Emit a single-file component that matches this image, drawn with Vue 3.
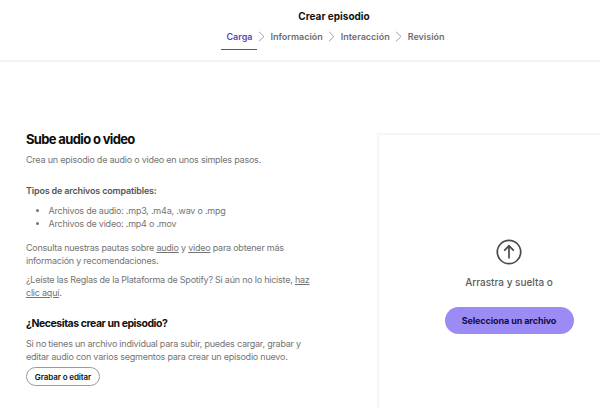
<script setup>
const steps = ['Información', 'Interacción', 'Revisión']
</script>

<template>
  <div class="page">
    <header class="top">
      <h1 class="crumb-title">Crear episodio</h1>
      <nav class="steps">
        <span class="step active">Carga</span>
        <template v-for="s in steps" :key="s">
          <svg class="chev" width="7" height="11" viewBox="0 0 7 11"><path d="M1 .8 6 5.5 1 10.2" fill="none" stroke="#a3a3a3" stroke-width="1"/></svg>
          <span class="step">{{ s }}</span>
        </template>
      </nav>
    </header>
    <main class="body">
      <section class="left">
        <h2 class="title">Sube audio o video</h2>
        <p class="lead">Crea un episodio de audio o video en unos simples pasos.</p>
        <p class="types">Tipos de archivos compatibles:</p>
        <ul class="list">
          <li>Archivos de audio: .mp3, .m4a, .wav o .mpg</li>
          <li>Archivos de video: .mp4 o .mov</li>
        </ul>
        <p class="para">Consulta nuestras pautas sobre <u>audio</u> y <u>video</u> para obtener más<br>información y recomendaciones.</p>
        <p class="para rules">¿Leíste las Reglas de la Plataforma de Spotify? Si aún no lo hiciste, <u>haz<br>clic aquí</u>.</p>
        <h3 class="need">¿Necesitas crear un episodio?</h3>
        <p class="para sub">Si no tienes un archivo individual para subir, puedes cargar, grabar y<br>editar audio con varios segmentos para crear un episodio nuevo.</p>
        <button class="ghost">Grabar o editar</button>
      </section>
      <aside class="drop">
        <svg class="up" width="26" height="26" viewBox="0 0 26 26" fill="none" stroke="#4a4a4a" stroke-width="1.7">
          <circle cx="13" cy="13" r="11.7"/>
          <path d="M13 19.5V7M8.2 11.6 13 6.8l4.8 4.8"/>
        </svg>
        <p class="drag">Arrastra y suelta o</p>
        <button class="pick">Selecciona un archivo</button>
      </aside>
    </main>
  </div>
</template>

<style>
body { margin: 0; background: #fff; }
</style>

<style scoped>
.page { width: 600px; height: 408px; overflow: hidden; font-family: Inter, "Liberation Sans", sans-serif; color: #747474; background: #fff; }
.top { width: 668px; height: 60px; border-bottom: 2px solid #f4f4f4; display: flex; flex-direction: column; align-items: center; }
.crumb-title { margin: 10px 0 0; font-size: 10px; line-height: 13px; font-weight: 700; color: #111; }
.steps { display: flex; align-items: flex-start; gap: 4.5px; margin-top: 8px; margin-left: -1px; }
.step { font-size: 9px; line-height: 12px; font-weight: 600; color: #6f6f6f; padding: 0 1px; }
.active { color: #5b45b8; padding: 0 5px 6px; border-bottom: 1px solid #5b45b8; margin-right: -4px; }
.body { display: flex; padding-top: 71px; width: 639px; }
.left { flex: none; width: 377px; padding-left: 26px; box-sizing: border-box; }
.title { margin: -2px 0 0; font-size: 13px; letter-spacing: -.65px; line-height: 16px; font-weight: 700; color: #0d0d0d; }
.lead { margin: 6px 0 0; font-size: 9px; letter-spacing: -.22px; line-height: 13px; }
.types { margin: 18px 0 0; font-size: 9px; letter-spacing: -.17px; line-height: 13px; font-weight: 600; color: #555; }
.list { margin: 8px 0 0; padding: 0 0 0 22.5px; font-size: 9px; letter-spacing: -.22px; line-height: 12.5px; }
.para { margin: 0; font-size: 9px; letter-spacing: -.23px; line-height: 12.5px; }
.list + .para { margin-top: 12px; }
.rules { margin-top: 7px; }
.need { margin: 18px 0 0; font-size: 10.5px; letter-spacing: -.45px; line-height: 14px; font-weight: 700; color: #111; }
.sub { margin-top: 7px; }
.ghost { display: block; margin-top: 4px; width: 74px; height: 19px; padding: 0; border: 1px solid #9a9a9a; border-radius: 10px; background: #fff; font: 600 8px Inter, sans-serif; letter-spacing: -.1px; color: #111; }
.drop { flex: 1; border: solid #f6f6f6; border-width: 2px 0 0 2px; display: flex; flex-direction: column; align-items: center; padding-top: 104px; height: 300px; }
.up { display: block; }
.drag { margin: 11px 0 0; font-size: 10px; line-height: 13px; font-weight: 500; color: #5c5c5c; }
.pick { margin-top: 18px; width: 129px; height: 27px; border: 0; border-radius: 14px; background: #9a8cf4; font: 700 9px Inter, sans-serif; letter-spacing: -.1px; color: #150a45; }
</style>
